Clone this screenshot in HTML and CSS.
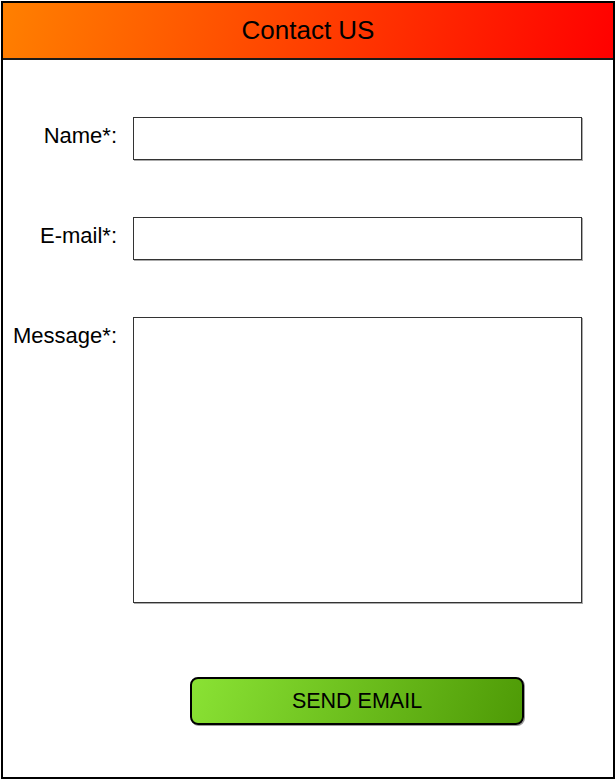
FILE: index.html
```html
<!DOCTYPE html>
<html lang="en">
<head>
<meta charset="utf-8">
<title>Contact US</title>
<link rel="stylesheet" href="styles.css">
</head>
<body>
<div class="frame">
  <header class="header">Contact US</header>
  <form class="form">
    <label class="label" for="name">Name*:</label>
    <input class="field" id="name" type="text">
    <label class="label" for="email">E-mail*:</label>
    <input class="field" id="email" type="text">
    <label class="label" for="msg">Message*:</label>
    <textarea class="field area" id="msg"></textarea>
    <button class="send" type="button">SEND EMAIL</button>
  </form>
</div>
</body>
</html>
```
FILE: styles.css
```css
html, body {
  margin: 0;
  padding: 0;
  background: #fff;
}
body {
  font-family: "Liberation Sans", Arial, sans-serif;
  color: #000;
}
.frame {
  margin: 1px 0 0 1px;
  width: 614px;
  height: 778px;
  box-sizing: border-box;
  border: 2px solid #000;
  display: flex;
  flex-direction: column;
}
.header {
  height: 55px;
  flex: none;
  border-bottom: 2px solid #1a1a1a;
  background: linear-gradient(105deg, #ff8000 0%, #ff0000 100%);
  display: flex;
  align-items: center;
  justify-content: center;
  font-size: 26px;
  box-sizing: content-box;
}
.form {
  display: grid;
  grid-template-columns: 114px 449px;
  column-gap: 16px;
  row-gap: 57px;
  padding-top: 57px;
  margin: 0;
}
.label {
  font-size: 22px;
  line-height: 24px;
  text-align: right;
  padding-top: 7px;
  white-space: nowrap;
}
.field {
  display: block;
  margin: 0;
  width: 449px;
  height: 43px;
  box-sizing: border-box;
  border: 1px solid #333;
  box-shadow: 1px 1px 0 #aaa;
  background: #fff;
  padding: 0;
  font: inherit;
  outline: none;
}
.area {
  height: 286px;
  resize: none;
}
.send {
  grid-column: 2;
  justify-self: start;
  margin: 17px 0 0 57px;
  width: 334px;
  height: 48px;
  box-sizing: border-box;
  border: 2px solid #000;
  border-radius: 8px;
  background: linear-gradient(110deg, #8ae234 0%, #4e9a06 100%);
  box-shadow: 1px 1px 0 #999;
  font-family: "Liberation Sans", Arial, sans-serif;
  font-size: 21.5px;
  color: #000;
  padding: 0;
  cursor: pointer;
}
```
